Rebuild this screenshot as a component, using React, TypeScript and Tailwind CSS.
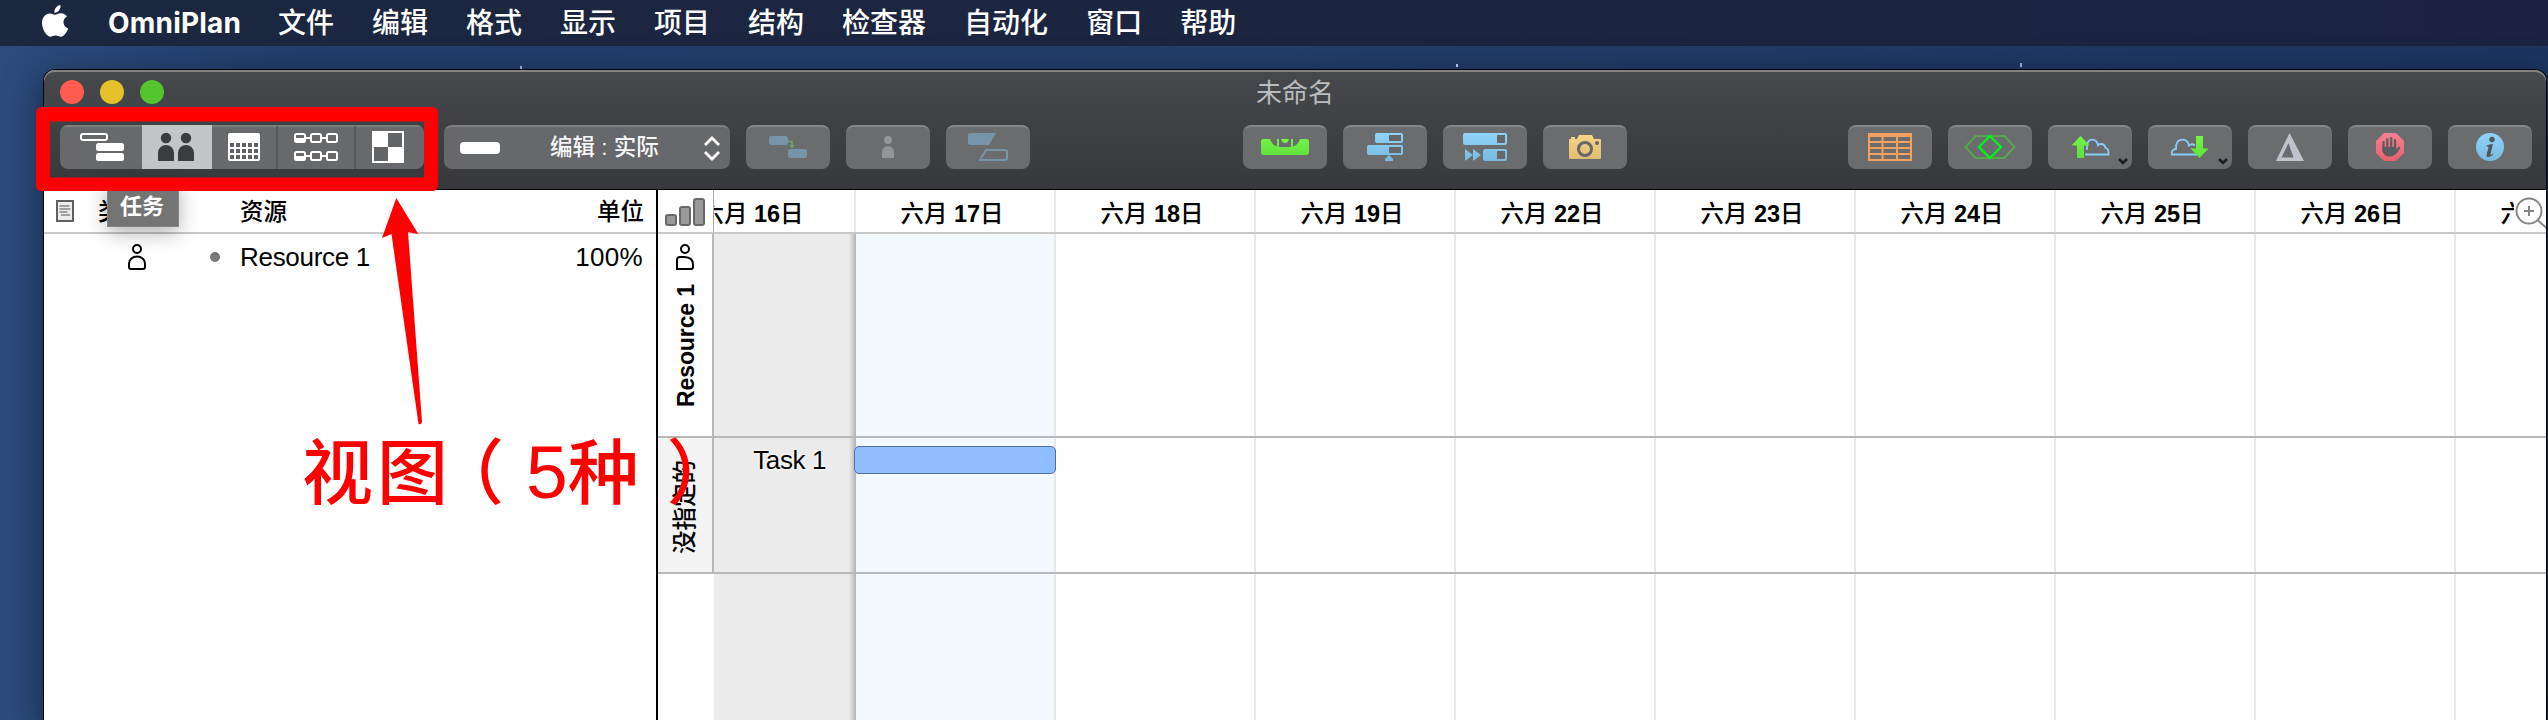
import type { ReactNode } from "react";

const menus = ["文件", "编辑", "格式", "显示", "项目", "结构", "检查器", "自动化", "窗口", "帮助"];
const days = [16, 17, 18, 19, 22, 23, 24, 25, 26, 27];

function ToolButton({ children }: { children: ReactNode }) {
  return (
    <button className="h-11 w-[84px] shrink-0 rounded-lg border-t-2 border-[#858689] bg-[#6b6c6e]">
      <svg width="84" height="44" viewBox="0 0 84 44" className="-mt-0.5 block">
        <defs>
          <linearGradient id="blue" x1="0" y1="8" x2="0" y2="36" gradientUnits="userSpaceOnUse">
            <stop offset="0" stopColor="#8fd3fa" />
            <stop offset="1" stopColor="#79b9df" />
          </linearGradient>
          <linearGradient id="green" x1="0" y1="11" x2="0" y2="33" gradientUnits="userSpaceOnUse">
            <stop offset="0" stopColor="#76f348" />
            <stop offset="1" stopColor="#5fe03c" />
          </linearGradient>
          <linearGradient id="gold" x1="0" y1="8" x2="0" y2="36" gradientUnits="userSpaceOnUse">
            <stop offset="0" stopColor="#f8d58a" />
            <stop offset="1" stopColor="#dfba70" />
          </linearGradient>
          <linearGradient id="red" x1="0" y1="8" x2="0" y2="36" gradientUnits="userSpaceOnUse">
            <stop offset="0" stopColor="#f68090" />
            <stop offset="1" stopColor="#e8606e" />
          </linearGradient>
        </defs>
        {children}
      </svg>
    </button>
  );
}

function ViewSwitcher() {
  return (
    <div className="relative flex h-11 w-[364px] shrink-0 overflow-hidden rounded-lg bg-[#68696c]">
      <div className="w-[82px] border-t-2 border-[#7d7e81]" />
      <div className="w-[70px] bg-[#c4c5c9]" />
      <div className="w-[66px] border-t-2 border-r-2 border-t-[#7d7e81] border-r-[#57585b]" />
      <div className="w-[78px] border-t-2 border-r-2 border-t-[#7d7e81] border-r-[#57585b]" />
      <div className="flex-1 border-t-2 border-[#7d7e81]" />
      <svg width="364" height="44" viewBox="0 0 364 44" className="absolute inset-0">
        <g fill="#fff">
          <rect x="21" y="9" width="26" height="6" rx="2" fill="none" stroke="#fff" strokeWidth="2" />
          <rect x="36" y="18" width="28" height="8" rx="2.5" />
          <rect x="36" y="28" width="28" height="8" rx="2.5" />
        </g>
        <g fill="#3b3c3f">
          <circle cx="106" cy="13" r="5.2" />
          <circle cx="126" cy="13" r="5.2" />
          <path d="M98 36V28a8 8 0 0 1 16 0v8zM118 36V28a8 8 0 0 1 16 0v8z" />
        </g>
        <rect x="168" y="8" width="32" height="28" rx="2" fill="#fff" />
        {[18, 24, 30].map((y) =>
          [170, 176, 182, 188, 194].map((x) => <rect key={`${x}-${y}`} x={x} y={y} width="4" height="4" fill="#606164" />),
        )}
        {[8, 26].map((y) => (
          <g key={y} fill="none" stroke="#fff" strokeWidth="2">
            <rect x="235" y={y + 1} width="10" height="8" rx="1.5" />
            <rect x="251" y={y + 1} width="10" height="8" rx="1.5" />
            <rect x="267" y={y + 1} width="10" height="8" rx="1.5" />
            <path d={`M245 ${y + 5}h6M261 ${y + 5}h6`} />
            <path d={`M235 ${y + 7}h10`} strokeWidth="4" />
          </g>
        ))}
        <rect x="312" y="6" width="32" height="32" fill="#fff" />
        <path d="M328 8h14v14h-14zM314 22h14v14h-14z" fill="#646568" />
      </svg>
    </div>
  );
}

function Person() {
  return (
    <svg width="20" height="26" viewBox="0 0 20 26" fill="none" stroke="#000" strokeWidth="2">
      <circle cx="10" cy="5" r="4" />
      <path d="M2 23v-3.500a8 7 0 0 1 16 0v3.500q0 2-2 2H4q-2 0-2-2z" />
    </svg>
  );
}

function LanePerson() {
  return (
    <svg width="20" height="26" viewBox="0 0 20 26" fill="none" stroke="#000" strokeWidth="2">
      <circle cx="10" cy="5" r="4" />
      <path d="M2 25v-9q0-3 3-3h4.500q8.500.3 8.500 7.500v2.500q0 2-2 2z" />
    </svg>
  );
}

function Toolbar() {
  return (
    <div className="mt-[11px] flex pr-[14px] pl-4">
      <ViewSwitcher />
      <div className="ml-5 flex h-11 w-[286px] shrink-0 items-center rounded-lg border-t-2 border-[#7d7e81] bg-[#67686b] pl-4 text-[#f6f6f7]">
        <div className="h-3 w-10 rounded bg-white" />
        <span className="ml-[50px] w-[119px] text-[22.500px] font-medium whitespace-nowrap">编辑 : 实际</span>
        <svg width="16" height="26" viewBox="0 0 16 26" fill="none" stroke="#fff" strokeWidth="2.800" className="ml-[35px]">
          <path d="M1 10l7-7 7 7M1 17l7 7 7-7" />
        </svg>
      </div>
      <div className="ml-4 flex gap-4">
        <ToolButton>
          <rect x="23" y="11" width="19" height="9" rx="2.500" fill="#7695a8" />
          <rect x="42" y="24" width="19" height="9" rx="2.500" fill="#7695a8" />
          <path d="M42 16.500h4v4" stroke="#6aa85a" strokeWidth="1.600" fill="none" />
          <path d="M43.500 20h5l-2.500 3.500z" fill="#6aa85a" />
        </ToolButton>
        <ToolButton>
          <circle cx="42" cy="15" r="4" fill="#949598" />
          <path d="M36 33v-6a6 6 0 0 1 12 0v6z" fill="#949598" />
        </ToolButton>
        <ToolButton>
          <path d="M24 8h26l-7 12H24q-2 0-2-2v-8q0-2 2-2z" fill="#7695a8" />
          <path d="M34 35l6-10h19q2 0 2 2v6q0 2-2 2z" fill="none" stroke="#7695a8" strokeWidth="2" />
        </ToolButton>
      </div>
      <div className="ml-[213px] flex gap-4">
        <ToolButton>
          <path
            d="M20.500 14H27q2 6 7 7.500V14h2v8h12v-8h2v7.500q5-1.500 7-7.500h6.500q2.500 0 2.500 2.500v10.500q0 3-3 3H21q-3 0-3-3V16.500q0-2.500 2.500-2.500z"
            fill="url(#green)"
          />
          <path d="M38 14h8q-1 4-4 4t-4-4z" fill="#76f348" />
        </ToolButton>
        <ToolButton>
          <g fill="url(#blue)">
            <rect x="32" y="8" width="28" height="10" rx="2" />
            <rect x="24" y="20" width="36" height="10" rx="2" />
            <path d="M46 30l4 4v2h-8v-2z" />
          </g>
          <path d="M46 10h12v6H46zM46 22h12v6H46z" fill="#66676a" />
        </ToolButton>
        <ToolButton>
          <g fill="url(#blue)">
            <rect x="20" y="8" width="44" height="12" rx="2" />
            <rect x="40" y="24" width="24" height="12" rx="2" />
            <path d="M22 24l8 6-8 6zM30 24l8 6-8 6z" />
          </g>
          <path d="M54 10h8v8h-8zM54 26h8v8h-8z" fill="#66676a" />
        </ToolButton>
        <ToolButton>
          <path d="M27 14h1v-2h4v2h2l2-4h13l2 4h6q1 0 1 1v18q0 1-1 1H27q-1 0-1-1V15q0-1 1-1z" fill="url(#gold)" />
          <circle cx="42" cy="24" r="6.500" fill="none" stroke="#66676a" strokeWidth="3" />
          <circle cx="54" cy="18" r="2" fill="#66676a" />
        </ToolButton>
      </div>
      <div className="ml-auto flex gap-4">
        <ToolButton>
          <path d="M21 9h42v26H21zM21 11h42M21 17h42M21 23h42M21 29h42M34.500 10v25M49 10v25" fill="none" stroke="#f3a060" strokeWidth="2" />
          <path d="M20 8h44v4H20z" fill="#f3a060" />
        </ToolButton>
        <ToolButton>
          <path d="M17.500 22L27.500 11h29l10 11-10 11h-29z" fill="none" stroke="#55a84e" strokeWidth="2" />
          <path d="M42 11l11 11-11 11-11-11z" fill="none" stroke="#00f31c" strokeWidth="2.400" />
        </ToolButton>
        <ToolButton>
          <path
            d="M37 29.500H60.500V27.500Q60.500 23.500 57.500 22.800Q56.500 19 53 19Q51.200 19 50 20.200Q48.800 14.700 44.300 14.700Q39.500 14.700 39 21V25"
            fill="none"
            stroke="#86cdf8"
            strokeWidth="1.800"
          />
          <path d="M32.500 11l9 9.500h-5.500V33h-7V20.500h-5.500z" fill="url(#green)" />
          <path d="M71 34l4 4 4-4" fill="none" stroke="#1d1d1f" strokeWidth="2.600" />
        </ToolButton>
        <ToolButton>
          <path
            d="M50 29.500H23.800V27.500Q24 24.500 28 24Q27.500 14.700 34.700 14.700Q39.500 14.700 41 20.500Q43.500 18 47 20.500"
            fill="none"
            stroke="#86cdf8"
            strokeWidth="1.800"
          />
          <path d="M51.500 33l-9-9.500H48V11h7v12.500h5.500z" fill="url(#green)" />
          <path d="M71 34l4 4 4-4" fill="none" stroke="#1d1d1f" strokeWidth="2.600" />
        </ToolButton>
        <ToolButton>
          <path d="M41.500 8L56 36H28zM40.500 18L33.500 32.500h12z" fill="#c2c3ca" fillRule="evenodd" />
        </ToolButton>
        <ToolButton>
          <path d="M36 8h12l8 8v12l-8 8H36l-8-8V16z" fill="url(#red)" />
          <g fill="none" stroke="#5b5c60" strokeWidth="2.200" strokeLinecap="round">
            <path d="M35.500 26V17M39.300 24V14M43.200 24V13M47 25V15M47.500 28l3.500-5" />
          </g>
          <path d="M34.500 22h13.500l1 4q-2 5.500-7 5.500-6.500 0-7.500-5.500z" fill="#5b5c60" />
        </ToolButton>
        <ToolButton>
          <circle cx="42" cy="22" r="14" fill="url(#blue)" />
          <circle cx="44" cy="14.500" r="2.700" fill="#55565a" />
          <path d="M38.500 20.500q3-1.500 6.500-1.500l-2.500 10q-.5 1.500.7.800l1.500-1 .5.800q-2.500 2.400-5 2.400-2.200 0-1.500-2.800l1.700-6.700q.3-1.300-1.900-1z" fill="#55565a" />
        </ToolButton>
      </div>
    </div>
  );
}

function Lane({ className, label, task }: { className: string; label?: ReactNode; task?: boolean }) {
  return (
    <div className={`flex overflow-hidden ${className}`}>
      {label ?? <div className="w-14 shrink-0" />}
      <div className="relative flex w-[142px] shrink-0 justify-end bg-[#ebebeb]">
        {task && (
          <span className="mt-1.5 mr-[30px] text-[26px] leading-8 tracking-[-0.4px] [text-shadow:0_0_3px_#fff,0_0_3px_#fff]">Task 1</span>
        )}
        <div className="absolute inset-y-0 right-0 w-[7px] bg-linear-to-r from-[#ebebeb] to-[#b2b2b2]" />
      </div>
      {days.slice(1).map((d) => (
        <div key={d} className={`relative w-[200px] shrink-0 border-r-2 border-[#e8e8e8] ${d === 17 ? "bg-[#f3f8fe]" : ""}`}>
          {task && d === 17 && <div className="absolute top-2 -left-0.5 h-7 w-[202px] rounded-[5px] border-[1.500px] border-[#4f6f9f] bg-[#90bdff]" />}
        </div>
      ))}
    </div>
  );
}

export default function App() {
  return (
    <div className="relative flex h-[720px] w-[2548px] flex-col overflow-hidden bg-[#22406e] font-['Liberation_Sans','Noto_Sans_CJK_SC',sans-serif] text-black">
      <nav className="flex h-[46px] shrink-0 items-center bg-linear-to-r from-[#1c2740] to-[#1b2340] pl-[42px] text-[28px] text-white">
        <svg width="27" height="32" viewBox="0 0 27 32" fill="#fff" className="-mt-1">
          <path d="M18.500 0q.5 3-1.500 5.500T12.300 7.800q-.4-2.800 1.500-5.100T18.500 0zM13.300 9.800c1.200 0 3-1.500 5.700-1.500 2.600 0 4.800 1.300 6 3.200-5.300 3.100-4.400 9.800 1.200 12-.9 2.600-4 8.200-7.300 8.200-2 0-2.800-1.200-5.300-1.200s-3.400 1.200-5.300 1.200C4.300 31.700 0 23.500 0 18 0 12 3.800 8.400 7.800 8.400c2.500 0 4.200 1.400 5.500 1.400z" />
        </svg>
        <span className="ml-[39px] w-[170px] pb-px font-['Inter','Noto_Sans',sans-serif] text-[28px] font-bold tracking-[0.2px]">OmniPlan</span>
        <div className="flex gap-[38px] pt-px font-medium whitespace-nowrap">
          {menus.map((m) => (
            <span key={m}>{m}</span>
          ))}
        </div>
      </nav>
      <main className="relative flex flex-1 bg-[linear-gradient(90deg,#2c4c7d_0%,#213f6e_12%,#213f6b_50%,#1c3562_100%)] pt-[23px] pl-[43px]">
        <i className="absolute top-[20px] left-[520px] h-[3px] w-0.5 bg-[#90a4c0]" />
        <i className="absolute top-[18px] left-[1456px] h-[3px] w-0.5 bg-[#b0c0d8]" />
        <i className="absolute top-[17px] left-[2020px] h-[4px] w-0.5 bg-[#90a4c0]" />
        <div className="flex w-[2504px] flex-col overflow-hidden rounded-t-[12px] border border-b-0 border-black bg-white shadow-[0_10px_36px_rgba(0,0,0,0.5)]">
          <header className="h-[120px] shrink-0 rounded-t-[11px] border-b border-black bg-linear-to-b from-[#47484b] via-[#3e4144] to-[#37383b] shadow-[inset_0_2px_0_#828386]">
            <div className="grid h-11 grid-cols-3 items-center px-4">
              <div className="flex gap-4">
                <i className="size-6 rounded-full bg-[#ff5b51]" />
                <i className="size-6 rounded-full bg-[#e6c02b]" />
                <i className="size-6 rounded-full bg-[#54c32c]" />
              </div>
              <h1 className="pt-0.5 text-center text-[26px] leading-8 text-[#bbbcbe]">未命名</h1>
            </div>
            <Toolbar />
          </header>
          <div className="flex flex-1">
            <aside className="w-[614px] shrink-0 border-r-2 border-black">
              <div className="flex h-11 items-center border-b-2 border-[#c8c8c8] pr-[12px] pl-3 text-[23.500px] font-medium">
                <svg width="18" height="22" viewBox="0 0 18 22" fill="#ececec" stroke="#5f5f5f" strokeWidth="2">
                  <rect x="1" y="1" width="16" height="20" />
                  <path d="M3.500 6h10M3.500 9h11M3.500 12h8M5 15h9" stroke="#858585" strokeWidth="1.500" />
                </svg>
                <span className="ml-6 w-[142px] pt-[3px]">类型</span>
                <span className="pt-[3px]">资源</span>
                <span className="ml-auto pt-[3px]">单位</span>
              </div>
              <div className="flex h-[46px] items-center pr-[13px] pl-[83px] text-[26px]">
                <Person />
                <i className="ml-[63px] size-2.5 rounded-full bg-[#777]" />
                <span className="ml-5 tracking-[-0.3px]">Resource 1</span>
                <span className="ml-auto tracking-[0.3px]">100%</span>
              </div>
            </aside>
            <section className="relative flex min-w-0 flex-1 flex-col overflow-hidden">
              <div className="flex h-11 shrink-0 border-b-2 border-[#c8c8c8]">
                <div className="flex w-14 shrink-0 items-end border-r border-[#aaa] pb-[5px] pl-[7px]">
                  <svg width="42" height="30" viewBox="0 0 42 30" fill="#999" stroke="#686868" strokeWidth="2">
                    <rect x="1" y="18" width="10" height="10" rx="2" />
                    <rect x="15" y="10" width="10" height="18" rx="2" />
                    <rect x="29" y="2" width="10" height="26" rx="2" />
                  </svg>
                </div>
                <div className="flex min-w-0 flex-1 justify-start overflow-hidden">
                  <div className="-ml-[58px] flex shrink-0">
                    {days.map((d) => (
                      <div key={d} className="flex w-[200px] shrink-0 items-center justify-center border-r-2 border-[#e8e8e8] pt-[7px] pr-1.5 text-[23.500px] whitespace-nowrap">
                        <span className="font-medium">六月&nbsp;</span>
                        <span className="font-bold">{d}</span>
                        <span className="font-medium">日</span>
                      </div>
                    ))}
                  </div>
                </div>
              </div>
              <Lane
                className="h-[204px] border-b-2 border-[#b8b8b8]"
                label={
                  <div className="flex w-14 shrink-0 flex-col items-center border-r-2 border-[#b8b8b8] pt-[10px]">
                    <LanePerson />
                    <span className="mt-[14px] rotate-180 pr-px text-[23px] leading-7 font-bold tracking-[-0.1px] whitespace-nowrap [writing-mode:vertical-rl]">Resource 1</span>
                  </div>
                }
              />
              <Lane
                task
                className="h-[136px] border-b-2 border-[#b8b8b8]"
                label={
                  <div className="flex w-14 shrink-0 items-center justify-center border-r-2 border-[#b8b8b8] bg-[#f3f3f3] pt-[3px]">
                    <span className="rotate-180 text-[23.500px] leading-7 font-medium whitespace-nowrap [text-orientation:sideways] [writing-mode:vertical-rl]">没指定的</span>
                  </div>
                }
              />
              <Lane className="flex-1" />
              <div className="absolute top-1 right-0 h-[37px] w-[32px] bg-white">
                <svg width="32" height="37" viewBox="0 0 32 37" fill="none" stroke="#858585" strokeWidth="2">
                  <circle cx="15" cy="17" r="12.500" />
                  <path d="M15 12v10M10 17h10M23.500 26l9 8" />
                </svg>
              </div>
            </section>
          </div>
        </div>
      </main>
      <div className="absolute top-[180px] left-[107px] flex h-[47px] w-[72px] items-end justify-center border border-[#858585] bg-[#747474] pr-0.5 pb-[3px] text-[22px] font-bold text-white shadow-[0_6px_20px_rgba(0,0,0,0.3)]">
        任务
      </div>
      <div className="absolute top-[107px] left-[36px] h-[84px] w-[402px]">
        <svg width="402" height="84" viewBox="0 0 402 84">
          <path d="M6 0H396q6 0 6 6V78q0 6-6 6H6q-6 0-6-6V6q0-6 6-6zM14 14.500V70.500H388V14.500z" fill="#f00" fillRule="evenodd" />
        </svg>
      </div>
      <svg width="44" height="230" viewBox="380 196 44 230" className="absolute top-[196px] left-[380px]">
        <path d="M396.300 198L418.300 234 408 232 422 422q-1 3-3.500 2L391.500 234 382 238z" fill="#f00" />
      </svg>
      <div className="absolute top-[418px] left-[302px] flex items-baseline text-[71px] leading-[108px] font-medium whitespace-nowrap text-[#f00]">
        <span className="tracking-[4px]">视图</span>
        <span className="relative -left-[19px] w-[74px]">（</span>
        <span className="text-[75px] font-normal">5</span>
        <span className="tracking-[4px]">种</span>
        <span className="relative left-[24px]">）</span>
      </div>
    </div>
  );
}
